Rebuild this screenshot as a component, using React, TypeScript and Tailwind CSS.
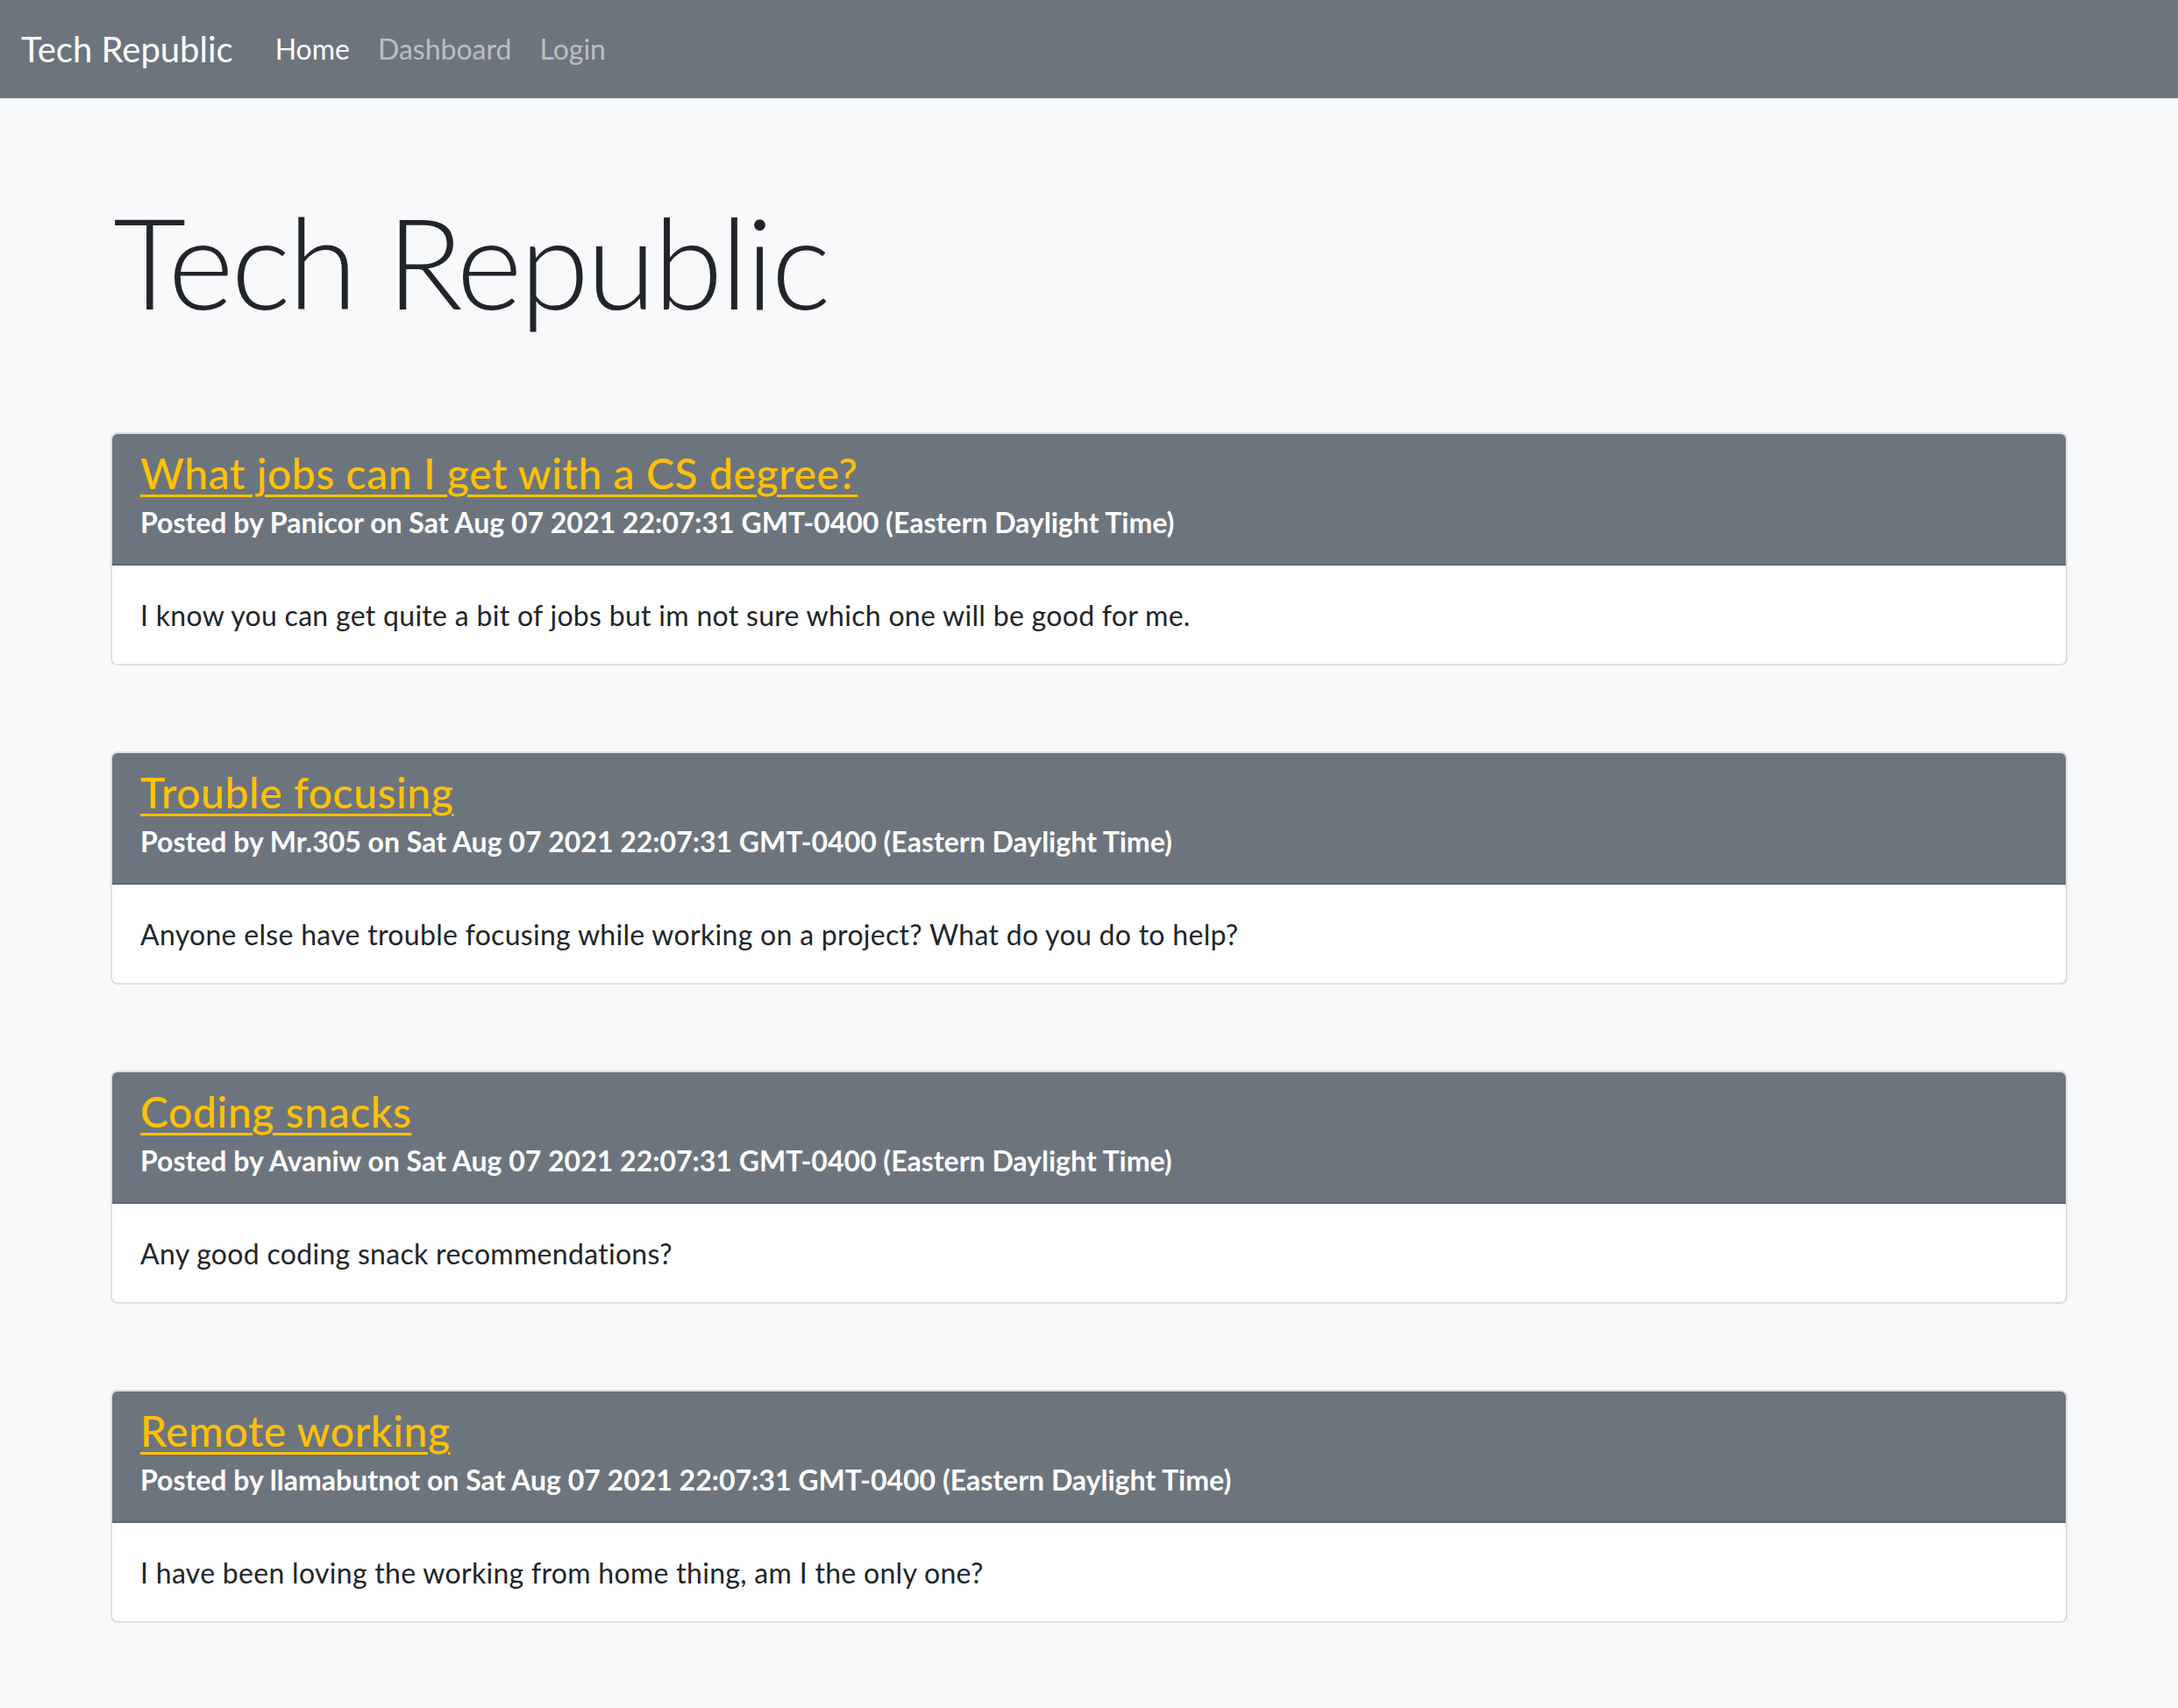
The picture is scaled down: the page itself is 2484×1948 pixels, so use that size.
import React from "react";

const posts = [
  {
    title: "What jobs can I get with a CS degree?",
    author: "Panicor",
    body: "I know you can get quite a bit of jobs but im not sure which one will be good for me.",
  },
  {
    title: "Trouble focusing",
    author: "Mr.305",
    body: "Anyone else have trouble focusing while working on a project? What do you do to help?",
  },
  {
    title: "Coding snacks",
    author: "Avaniw",
    body: "Any good coding snack recommendations?",
  },
  {
    title: "Remote working",
    author: "llamabutnot",
    body: "I have been loving the working from home thing, am I the only one?",
  },
];

export default function App() {
  return (
    <div className="min-h-screen bg-[#f8f9fa] font-['Lato',sans-serif] text-[#212529]">
      <nav className="h-[112px] bg-[#6c757d] flex items-center px-[24px]">
        <a href="#" className="text-[40px] leading-[60px] text-white mr-[32px]">
          Tech Republic
        </a>
        <a href="#" className="text-[32px] leading-[48px] text-white px-[16px]">
          Home
        </a>
        <a href="#" className="text-[32px] leading-[48px] text-[rgba(255,255,255,0.55)] px-[16px]">
          Dashboard
        </a>
        <a href="#" className="text-[32px] leading-[48px] text-[rgba(255,255,255,0.55)] px-[16px]">
          Login
        </a>
      </nav>

      <main className="mx-auto w-[2280px] px-[24px] pb-[96px]">
        <h1 className="mt-[100px] ml-[3px] text-[144px] font-light leading-[1.2] tracking-[-3px] text-[#212529]">
          Tech Republic
        </h1>

        <div className="mt-[108px] flex flex-col gap-[98px]">
          {posts.map((p) => (
            <div
              key={p.title}
              className="border-[2px] border-[#dfdfdf] rounded-[8px] overflow-hidden bg-white"
            >
              <div className="bg-[#6c757d] px-[32px] pt-[16px] pb-[28px] border-b-[2px] border-[#5e666d]">
                <div className="h-[58px] text-[48px] leading-[1.2] font-medium tracking-[0.6px]">
                  <a
                    href="#"
                    className="text-[#ffc107] underline decoration-[3px] underline-offset-[6px]"
                  >
                    {p.title}
                  </a>
                </div>
                <div className="mt-[8px] text-[32px] leading-[38px] font-bold text-white">
                  Posted by {p.author} on Sat Aug 07 2021 22:07:31 GMT-0400 (Eastern Daylight Time)
                </div>
              </div>
              <div className="px-[32px] pt-[33px] pb-[31px] text-[32px] leading-[48px] tracking-[0.3px]">
                {p.body}
              </div>
            </div>
          ))}
        </div>
      </main>
    </div>
  );
}
